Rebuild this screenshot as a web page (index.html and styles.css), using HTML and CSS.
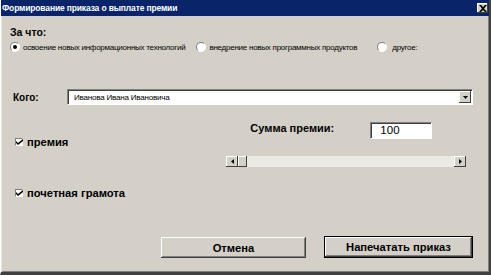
FILE: index.html
```html
<!DOCTYPE html>
<html lang="ru">
<head>
    <meta charset="UTF-8">
    <title>Формирование приказа о выплате премии</title>
    <link rel="stylesheet" href="styles.css">
</head>
<body>
    <div class="window">
        <div class="titlebar">
            <span class="title">Формирование приказа о выплате премии</span>
            <span class="close">
                <svg width="8" height="7" viewBox="0 0 8 7"><path d="M0 0h2l2 2 2-2h2L5 3.5 8 7H6L4 5 2 7H0l3-3.5z" fill="#000"/></svg>
            </span>
        </div>
        <div class="content">
            <div class="label-bold">За что:</div>
            <div class="radios">
                <label class="radio"><span class="dot checked"></span>освоение новых информационных технологий</label>
                <label class="radio r2"><span class="dot"></span>внедрение новых программных продуктов</label>
                <label class="radio r3"><span class="dot"></span>другое:</label>
            </div>

            <div class="who-row">
                <span class="label-bold who">Кого:</span>
                <div class="combo">
                    <span class="combo-text">Иванова Ивана Ивановича</span>
                    <span class="combo-btn">
                        <svg width="5" height="3" viewBox="0 0 5 3"><path d="M0 0h5L2.5 3z" fill="#000"/></svg>
                    </span>
                </div>
            </div>

            <div class="bonus-row">
                <label class="check big bonus-check"><span class="box"><svg width="7" height="7" viewBox="0 0 7 7"><path d="M0 2l2 2 5-4v2L2 6 0 4z" fill="#000"/></svg></span>премия</label>
                <div class="bonus-side">
                    <div class="sum-row">
                        <span class="sum-label">Сумма премии:</span>
                        <span class="sum-input">100</span>
                    </div>
                    <div class="scrollbar">
                        <span class="sb-btn"><svg width="3" height="5" viewBox="0 0 3 5"><path d="M3 0v5L0 2.5z" fill="#000"/></svg></span>
                        <span class="sb-btn thumb"></span>
                        <span class="sb-track"></span>
                        <span class="sb-btn"><svg width="3" height="5" viewBox="0 0 3 5"><path d="M0 0v5l3-2.5z" fill="#000"/></svg></span>
                    </div>
                </div>
            </div>

            <label class="check big diploma"><span class="box"><svg width="7" height="7" viewBox="0 0 7 7"><path d="M0 2l2 2 5-4v2L2 6 0 4z" fill="#000"/></svg></span>почетная грамота</label>

            <div class="buttons">
                <button class="btn">Отмена</button>
                <button class="btn default">Напечатать приказ</button>
            </div>
        </div>
    </div>
</body>
</html>
```

FILE: styles.css
```css
body {
    margin: 0;
    background: #d4d0c8;
    font-family: 'Liberation Sans', Arial, sans-serif;
}

.window {
    width: 491px;
    height: 275px;
    box-sizing: border-box;
    background: #d4d0c8;
    border-left: 1px solid #fff;
    border-right: 2px solid #404040;
    border-bottom: 3px solid #404040;
    box-shadow: inset 1px 0 0 #e8e6e0, inset -1px -1px 0 #808080;
    overflow: hidden;
}

.titlebar {
    height: 16px;
    margin: 0 0 0 -1px;
    background: #0a246a;
    display: flex;
    align-items: center;
    justify-content: space-between;
    padding: 0 1px 0 2px;
}

.title {
    color: #fff;
    font-size: 8.5px;
    font-weight: bold;
    letter-spacing: -0.15px;
}

.close {
    width: 11px;
    height: 10px;
    background: #d4d0c8;
    box-shadow: inset -1px -1px 0 #404040, inset 1px 1px 0 #fff;
    display: flex;
    align-items: center;
    justify-content: center;
}

.content {
    padding: 10px 0 0 9px;
}

.label-bold {
    font-size: 10.5px;
    font-weight: bold;
    color: #000;
}

.radios {
    display: flex;
    align-items: center;
    margin-top: 3px;
    font-size: 8px;
    letter-spacing: -0.25px;
    height: 12px;
}

.radio {
    display: flex;
    align-items: center;
    gap: 3px;
}

.r2 { margin-left: 11px; }
.r3 { margin-left: 20px; gap: 5px; }

.dot {
    width: 10px;
    height: 10px;
    border-radius: 50%;
    background: #fff;
    box-sizing: border-box;
    border: 1px solid;
    border-color: #808080 #fff #fff #808080;
    position: relative;
}

.dot.checked::after {
    content: '';
    position: absolute;
    left: 2px;
    top: 2px;
    width: 4px;
    height: 4px;
    border-radius: 50%;
    background: #000;
}

.who-row {
    display: flex;
    align-items: center;
    margin-top: 36px;
}

.who {
    width: 54px;
    padding-left: 3px;
    font-size: 10px;
}

.combo {
    width: 406px;
    height: 16px;
    box-sizing: border-box;
    background: #fff;
    border: 1px solid;
    border-color: #808080 #fff #fff #808080;
    box-shadow: inset 1px 1px 0 #404040;
    display: flex;
    align-items: center;
    justify-content: space-between;
    font-size: 8px;
    letter-spacing: -0.2px;
    padding: 0 1px 0 6px;
}

.combo-btn {
    width: 12px;
    height: 12px;
    background: #d4d0c8;
    box-shadow: inset -1px -1px 0 #404040, inset 1px 1px 0 #fff;
    display: flex;
    align-items: center;
    justify-content: center;
}

.bonus-row {
    display: flex;
    align-items: center;
    margin-top: 17px;
}

.check {
    display: flex;
    align-items: center;
    gap: 4px;
}

.big {
    font-size: 11.2px;
    font-weight: bold;
    padding-left: 5px;
}

.bonus-check {
    margin-bottom: 5px;
}

.box {
    width: 8px;
    height: 8px;
    box-sizing: border-box;
    background: #fff;
    border: 1px solid;
    border-color: #808080 #fff #fff #808080;
    display: flex;
    align-items: center;
    justify-content: center;
}

.box svg {
    flex: none;
}

.bonus-side {
    margin-left: 158px;
    width: 240px;
}

.sum-row {
    display: flex;
    align-items: center;
    height: 17px;
}

.sum-label {
    font-size: 11px;
    font-weight: bold;
    margin-left: 24px;
    width: 120px;
    position: relative;
    top: -3px;
}

.sum-input {
    width: 62px;
    height: 17px;
    box-sizing: border-box;
    background: #fff;
    border: 1px solid;
    border-color: #808080 #fff #fff #808080;
    box-shadow: inset 1px 1px 0 #404040;
    font-size: 11.5px;
    padding: 1px 0 0 9px;
}

.scrollbar {
    display: flex;
    height: 11px;
    margin-top: 17px;
    background: #ebe9e4;
}

.sb-btn {
    width: 12px;
    height: 11px;
    box-sizing: border-box;
    background: #d4d0c8;
    box-shadow: inset -1px -1px 0 #404040, inset 1px 1px 0 #fff;
    display: flex;
    align-items: center;
    justify-content: center;
}

.thumb {
    width: 9px;
}

.sb-track {
    flex: 1;
}

.diploma {
    margin-top: 20px;
}

.buttons {
    display: flex;
    gap: 18px;
    margin: 38px 0 0 151px;
}

.btn {
    width: 145px;
    height: 21px;
    background: #d4d0c8;
    border: none;
    box-shadow: inset -1px -1px 0 #404040, inset 1px 1px 0 #fff, inset -2px -2px 0 #808080;
    font-family: 'Liberation Sans', Arial, sans-serif;
    font-size: 11.2px;
    font-weight: bold;
    color: #000;
    padding: 0;
}

.btn.default {
    width: 149px;
    border: 1px solid #000;
    height: 22px;
    margin-top: -1px;
}
```
